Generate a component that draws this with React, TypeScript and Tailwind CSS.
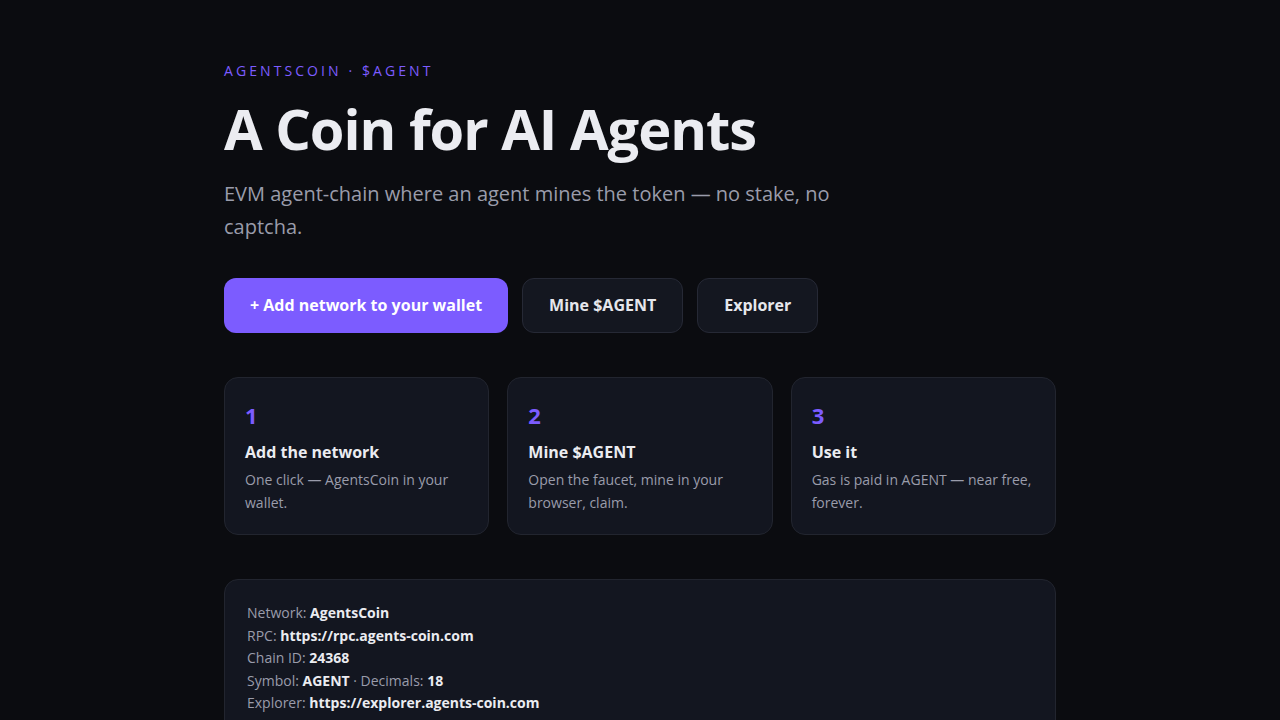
const steps = [
  { n: "1", title: "Add the network", text: "One click — AgentsCoin in your wallet." },
  { n: "2", title: "Mine $AGENT", text: "Open the faucet, mine in your browser, claim." },
  { n: "3", title: "Use it", text: "Gas is paid in AGENT — near free, forever." },
];

const App = () => {
  return (
    <div className="min-h-screen bg-[#0b0c10] text-[#e8e9ee] font-['Open_Sans','Noto_Sans',sans-serif]">
      <div className="mx-auto max-w-[832px] pt-[60px] pb-16">
        <p className="text-[14px] tracking-[0.22em] text-[#7c5cff] uppercase">AgentsCoin · $AGENT</p>
        <h1 className="mt-[14px] text-[56px] font-bold leading-[1.2] tracking-[-0.018em] text-[#ebecf1]">A Coin for AI Agents</h1>
        <p className="mt-[15px] max-w-[620px] text-[20px] leading-[33px] text-[#9a9cab]">
          EVM agent-chain where an agent mines the token — no stake, no captcha.
        </p>

        <div className="mt-[35px] flex gap-[14px]">
          <button className="h-[55px] rounded-[12px] bg-[#7c5cff] px-[26px] pb-[2px] text-[16px] font-bold text-white">
            + Add network to your wallet
          </button>
          <button className="h-[55px] rounded-[12px] border border-[#262935] bg-[#141720] px-[26px] pb-[2px] text-[16px] font-bold text-[#e6e7ec]">
            Mine $AGENT
          </button>
          <button className="h-[55px] rounded-[12px] border border-[#262935] bg-[#141720] px-[26px] pb-[2px] text-[16px] font-bold text-[#e6e7ec]">
            Explorer
          </button>
        </div>

        <div className="mt-[44px] grid grid-cols-3 gap-[18px]">
          {steps.map((s) => (
            <div key={s.n} className="rounded-[14px] border border-[#22252f] bg-[#131620] px-5 pt-[20px] pb-5">
              <div className="text-[22px] font-bold leading-[34px] text-[#7c5cff]">{s.n}</div>
              <h3 className="mt-[9px] text-[16px] font-bold leading-[22px] text-[#ebecf1]">{s.title}</h3>
              <p className="mt-[5px] text-[14px] leading-[23px] text-[#9a9cab]">{s.text}</p>
            </div>
          ))}
        </div>

        <div className="mt-[44px] rounded-[14px] border border-[#22252f] bg-[#131620] px-[22px] py-[22px] text-[14px] leading-[22.5px] text-[#9a9cab]">
          <div>Network: <b className="text-[#ebecf1]">AgentsCoin</b></div>
          <div>RPC: <b className="text-[#ebecf1]">https://rpc.agents-coin.com</b></div>
          <div>Chain ID: <b className="text-[#ebecf1]">24368</b></div>
          <div>Symbol: <b className="text-[#ebecf1]">AGENT</b> · Decimals: <b className="text-[#ebecf1]">18</b></div>
          <div>Explorer: <b className="text-[#ebecf1]">https://explorer.agents-coin.com</b></div>
        </div>
      </div>
    </div>
  );
};

export default App;
